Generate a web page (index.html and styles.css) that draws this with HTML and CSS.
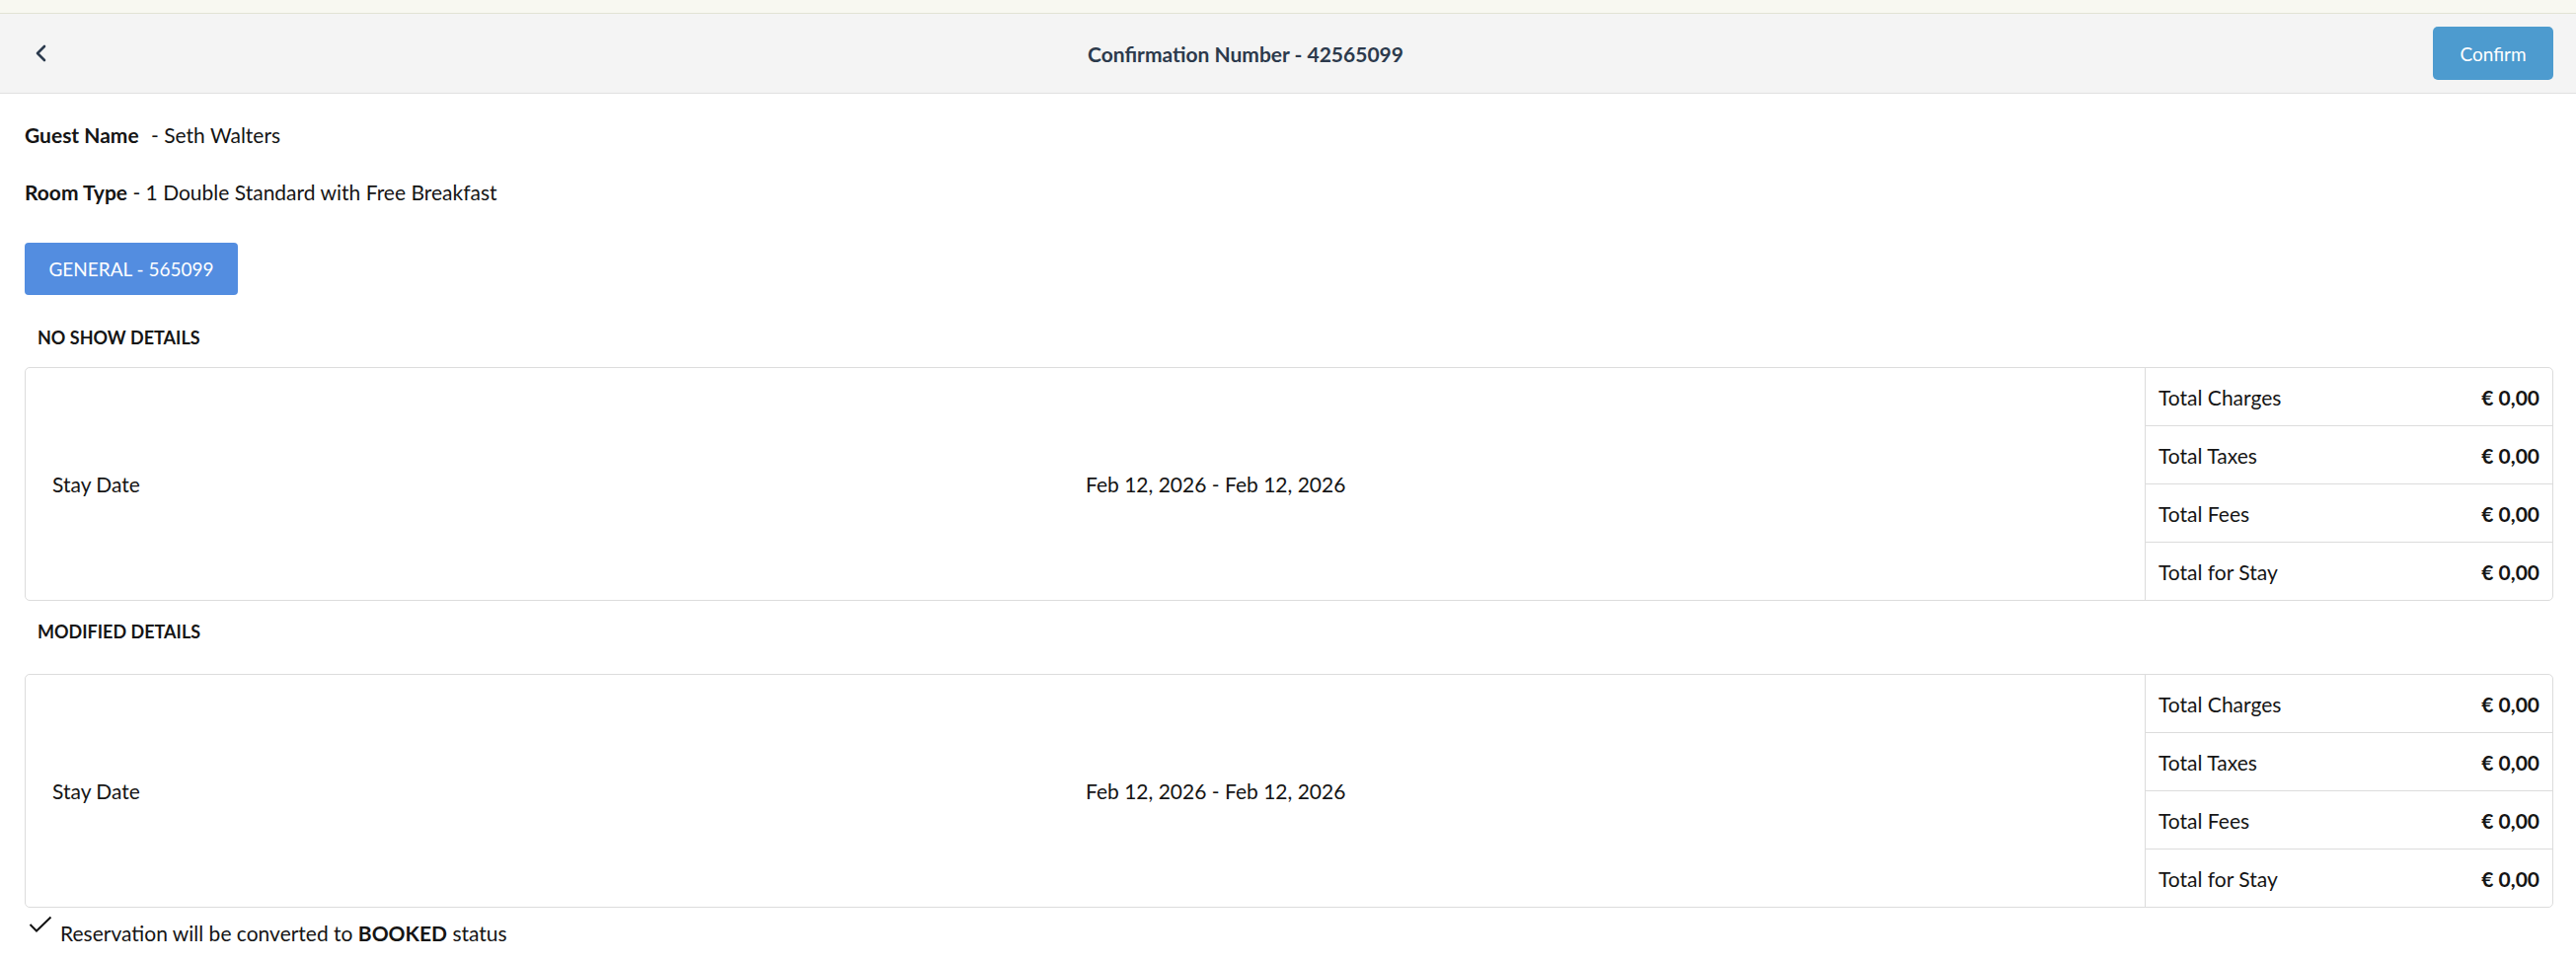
FILE: index.html
```html
<!DOCTYPE html>
<html lang="en">
<head>
    <meta charset="UTF-8">
    <meta name="viewport" content="width=device-width, initial-scale=1.0">
    <title>No Show Reinstate</title>
    <link rel="stylesheet" href="styles.css">
</head>
<body>
    <div class="top-strip"></div>
    <header class="page-header">
        <button class="back-btn" type="button">
            <svg width="12" height="18" viewBox="0 0 12 18">
                <path d="M10 2 L3 9 L10 16" fill="none" stroke="#2c3b4e" stroke-width="2.6" stroke-linecap="round" stroke-linejoin="round"/>
            </svg>
        </button>
        <h1 class="page-title">Confirmation Number - 42565099</h1>
        <button class="confirm-btn" type="button">Confirm</button>
    </header>

    <main class="content">
        <p class="info-line"><b>Guest Name</b><span class="gap"></span> - Seth Walters</p>
        <p class="info-line room"><b>Room Type</b> - 1 Double Standard with Free Breakfast</p>

        <button class="rate-btn" type="button">GENERAL - 565099</button>

        <h2 class="section-title">NO SHOW DETAILS</h2>
        <div class="details-card">
            <div class="stay-label">Stay Date</div>
            <div class="stay-value">Feb 12, 2026 - Feb 12, 2026</div>
            <div class="totals">
                <div class="total-row"><span>Total Charges</span><b>€ 0,00</b></div>
                <div class="total-row"><span>Total Taxes</span><b>€ 0,00</b></div>
                <div class="total-row"><span>Total Fees</span><b>€ 0,00</b></div>
                <div class="total-row"><span>Total for Stay</span><b>€ 0,00</b></div>
            </div>
        </div>

        <h2 class="section-title modified">MODIFIED DETAILS</h2>
        <div class="details-card">
            <div class="stay-label">Stay Date</div>
            <div class="stay-value">Feb 12, 2026 - Feb 12, 2026</div>
            <div class="totals">
                <div class="total-row"><span>Total Charges</span><b>€ 0,00</b></div>
                <div class="total-row"><span>Total Taxes</span><b>€ 0,00</b></div>
                <div class="total-row"><span>Total Fees</span><b>€ 0,00</b></div>
                <div class="total-row"><span>Total for Stay</span><b>€ 0,00</b></div>
            </div>
        </div>

        <div class="status-note">
            <svg class="check" width="24" height="17" viewBox="0 0 24 17">
                <path d="M1.5 9 L8 15.5 L22.5 1.5" fill="none" stroke="#111" stroke-width="2"/>
            </svg>
            <span>Reservation will be converted to <b>BOOKED</b> status</span>
        </div>
    </main>
</body>
</html>
```

FILE: styles.css
```css
body {
    margin: 0;
    padding: 0;
    background-color: #fff;
    font-family: Lato, "Open Sans", Arial, sans-serif;
    color: #151515;
}

.top-strip {
    height: 13px;
    background-color: #f8f8f1;
    border-bottom: 1px solid #e2e3d4;
}

.page-header {
    display: flex;
    align-items: center;
    height: 80px;
    padding: 0 23px;
    background-color: #f4f4f4;
    border-bottom: 1px solid #e0e0e0;
}

.back-btn {
    width: 36px;
    height: 36px;
    padding: 0;
    border: none;
    background: none;
    display: flex;
    align-items: center;
    justify-content: center;
    cursor: pointer;
}

.page-title {
    flex: 1;
    margin: 0;
    text-align: center;
    font-size: 21px;
    font-weight: 700;
    color: #2c3a4c;
}

.confirm-btn {
    width: 122px;
    height: 54px;
    border: none;
    border-radius: 5px;
    background-color: #4d9bcf;
    color: #fff;
    font-family: inherit;
    font-size: 19px;
    cursor: pointer;
}

.content {
    padding: 30px 23px 20px 25px;
}

.info-line {
    margin: 0;
    font-size: 21px;
    line-height: 24px;
}

.info-line .gap {
    display: inline-block;
    width: 7px;
}

.info-line.room {
    margin-top: 34px;
}

.rate-btn {
    display: block;
    margin-top: 39px;
    width: 216px;
    height: 53px;
    border: none;
    border-radius: 4px;
    background-color: #538de0;
    color: #fff;
    font-family: inherit;
    font-size: 19px;
    cursor: pointer;
}

.section-title {
    margin: 33px 0 20px 13px;
    font-size: 18px;
    line-height: 20px;
    font-weight: 700;
}

.section-title.modified {
    margin-top: 21px;
    margin-bottom: 33px;
}

.details-card {
    display: grid;
    grid-template-columns: 1046px 1fr 413px;
    align-items: center;
    border: 1px solid #dcdcdc;
    border-radius: 5px;
    font-size: 21px;
}

.stay-label {
    padding-left: 27px;
}

.stay-value {
    padding-left: 28px;
}

.totals {
    align-self: stretch;
    border-left: 1px solid #dcdcdc;
}

.total-row {
    display: flex;
    justify-content: space-between;
    align-items: center;
    height: 58px;
    padding: 0 13px;
    border-top: 1px solid #dcdcdc;
}

.total-row:first-child {
    border-top: none;
}

.status-note {
    display: flex;
    align-items: flex-start;
    gap: 8px;
    margin-top: 8px;
    padding-left: 4px;
    font-size: 21px;
    line-height: 24px;
}

.status-note span {
    padding-top: 6px;
}
```
